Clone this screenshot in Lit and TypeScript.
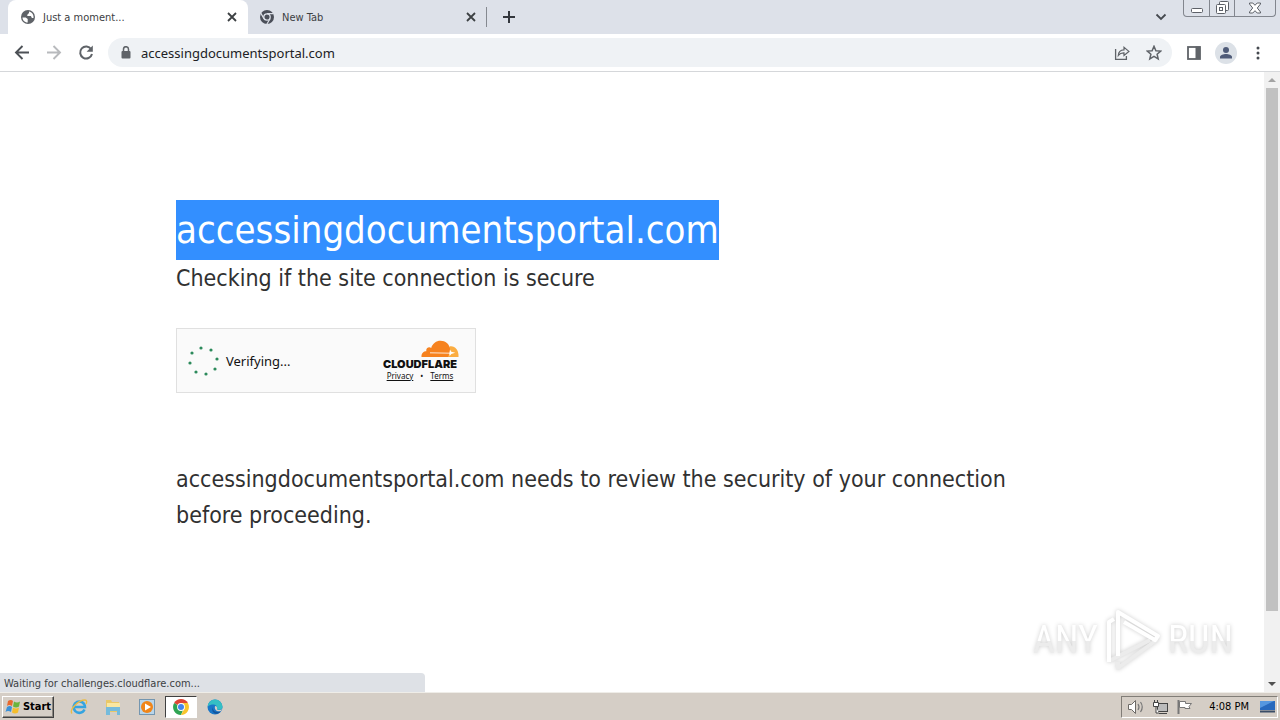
import { LitElement, html, css, svg } from "lit";
import { customElement } from "lit/decorators.js";

const closeIcon = html`<svg width="10" height="10" viewBox="0 0 10 10"><path d="M1 1l8 8M9 1l-8 8" fill="none" stroke="currentColor" stroke-width="1.8"/></svg>`;

const cloud = html`<svg class="cloud" width="38" height="18" viewBox="0 0 38 18" aria-hidden="true">
  <path fill="#fbad41" d="M29 6.2C34 5.500 38 10 37.500 17H23Z"/>
  <path fill="#f6821f" d="M.5 17C.2 13.200 2.700 11.200 5.300 11.200C4.700 8.200 8 6.300 10.200 8C11.600 3.500 15.200.8 19.500.8C24.500.8 28.300 4 29 8.800C29.300 10.500 29 11.700 28.600 12.900L27 17Z"/>
  <path d="M9 12.800L29 13.200" fill="none" stroke="#fff" stroke-width=".8"/>
  <path d="M29 9.500l1.300 2.300 4 .9-4 1.200-1.600 2.100-.4-2.500z" fill="#fff"/>
</svg>`;

const dots = [[14, 2], [24, 4], [30, 13], [28, 23], [19, 28], [9, 26], [3, 17], [5, 7]];

@customElement("app-root")
export class AppRoot extends LitElement {
  static styles = css`
    :host { display: block; font-family: "DejaVu Sans Condensed", "DejaVu Sans", sans-serif; color: #202124; }
    * { box-sizing: border-box; }
    button { font: inherit; color: inherit; background: none; border: 0; padding: 0; display: flex; align-items: center; justify-content: center; }
    svg { display: block; flex: none; }
    .ui { font-size: 11px; line-height: 17px; }
    .screen { display: flex; flex-direction: column; height: 100vh; overflow: hidden; background: #fff; }
    .tabs { display: flex; align-items: flex-start; height: 34px; flex: none; background: #dde1e9; padding-left: 8px; }
    .tab { display: flex; align-items: center; height: 34px; width: 240px; padding: 0 11px 0 12px; gap: 7px; border-radius: 8px 8px 0 0; color: #3c4043; }
    .tab.active { background: #fff; }
    .tab span { flex: 1; }
    .new { height: 20px; margin-top: 7px; padding-left: 16px; border-left: 1px solid #858990; }
    .tab:not(.active) { width: 238px; padding-left: 11px; padding-right: 10px; }
    .search { margin: 13px 16px 0 auto; }
    .window { display: flex; height: 17px; border: 1px solid #82868e; border-top: 0; border-radius: 0 0 4px 4px; margin-right: 4px; color: #5d6168; }
    .window button { width: 25px; }
    .window button + button { border-left: 1px solid #82868e; }
    .window button:last-child { width: 41px; }
    .toolbar { display: flex; align-items: center; flex: none; height: 38px; border-bottom: 1px solid #d5d7da; padding: 0 14px; gap: 16px; color: #5f6368; }
    .address { display: flex; align-items: center; flex: 1; height: 29px; border-radius: 15px; background: #eff2f5; padding: 0 10px; gap: 16px; margin-left: -2px; margin-right: -2px; }
    .address label { display: flex; padding-left: 2px; margin-right: -7px; }
    .address input { flex: 1; min-width: 0; border: 0; padding: 0; background: none; outline: 0; font: 13px/20px "Noto Sans", sans-serif; color: #202124; }
    .avatar { width: 22px; height: 22px; border-radius: 50%; background: #dce1e7; margin: 0 -3px; }
    .view { position: relative; display: flex; flex: 1; min-height: 0; }
    main { flex: 1; min-width: 0; color: #313131; }
    .content { max-width: 960px; margin: 128px auto 0; padding: 0 24px; }
    h1, h2, p { margin: 0; font-weight: 400; }
    h1 { font-size: 38px; line-height: 60px; color: #fff; }
    h1 span { display: inline-block; background: #338fff; }
    h2, p { font-size: 23px; line-height: 36px; }
    p { max-width: 880px; }
    .challenge { display: flex; align-items: center; width: 300px; height: 65px; margin: 32px 0 68px; padding: 0 16px 0 10px; border: 1px solid #e0e0e0; background: #fafafa; color: #111; }
    .verify { flex: 1; padding-left: 5px; font: 13px/20px "Noto Sans", sans-serif; }
    .brand { display: flex; flex-direction: column; align-items: center; width: 78px; }
    .cloud { align-self: flex-end; }
    .brand b { font: 900 11px/12px Inter, sans-serif; }
    .brand .links { display: flex; gap: 7px; font: 8px/12px "Noto Sans", sans-serif; }
    a { color: inherit; }
    .scroll { display: flex; flex-direction: column; align-items: center; width: 16px; background: #f1f1f1; }
    .scroll button { height: 16px; width: 16px; flex: none; }
    .track { flex: 1; align-self: stretch; padding: 0 2px; }
    .thumb { height: 89%; background: #c1c1c1; }
    .status { position: absolute; left: 0; bottom: 0; width: 425px; height: 19px; padding: 2px 4px; background: #dee1e6; border-radius: 0 4px 0 0; color: #3c4043; }
    .mark { position: absolute; right: 47px; bottom: 20px; display: flex; align-items: center; gap: 6px; font: 38px/60px "Roboto Condensed", "Liberation Sans Narrow", Roboto, sans-serif; filter: drop-shadow(0 0 2px #ccc); }
    .mark span { color: transparent; background: linear-gradient(#fff 52%, #ececec 52%); -webkit-background-clip: text; background-clip: text; }
    .taskbar { display: flex; align-items: center; flex: none; height: 28px; background: #d5cec6; border-top: 1px solid #efede8; padding: 0 2px; }
    .start { width: 52px; height: 22px; gap: 1px; border: 1px solid; border-color: #fff #404040 #404040 #fff; box-shadow: inset -1px -1px #8a8680; color: #000; font-weight: 700; margin-right: 9px; }
    .app { width: 32px; height: 22px; margin-right: 2px; }
    .app.active { background: #fff; border: 1px solid; border-color: #404040 #fff #fff #404040; }
    .tray { display: flex; align-items: center; height: 22px; margin-left: auto; padding: 0 1px 0 5px; gap: 7px; border: 1px solid; border-color: #817d77 #fff #fff #817d77; color: #000; }
    .tray time { padding: 0 3px 0 9px; }
  `;

  render() {
    return html`
      <div class="screen">
        <header class="tabs ui">
          <div class="tab active">
            <svg width="16" height="16" viewBox="0 0 16 16"><circle cx="8" cy="8" r="7" fill="#5f6368"/><path d="M2.500 8.500h3.200l2 1.500v3.500C4.500 13.500 2.500 11 2.500 8.500ZM9 2.600v1.500L7.300 5.700v1.400h3.600l1 2h1.600C14 5.700 11.500 2.900 9 2.600Z" fill="#fff"/></svg>
            <span>Just a moment...</span><button aria-label="Close tab">${closeIcon}</button>
          </div>
          <div class="tab">
            <svg width="16" height="16" viewBox="0 0 16 16"><circle cx="8" cy="8" r="7" fill="#4b4f59"/><circle cx="8" cy="8" r="3.200" fill="#4b4f59" stroke="#dde1e9" stroke-width="1.300"/><path d="M8 4.600h6.500M5 9.700L1.800 4.100M11 9.700l-3.200 5.500" stroke="#dde1e9" stroke-width="1.200"/></svg>
            <span>New Tab</span><button aria-label="Close tab">${closeIcon}</button>
          </div>
          <button class="new" aria-label="New tab"><svg width="12" height="12" viewBox="0 0 12 12"><path d="M6 0v12M0 6h12" stroke="#33373d" stroke-width="2"/></svg></button>
          <button class="search" aria-label="Search tabs"><svg width="12" height="8" viewBox="0 0 12 8"><path d="M1.500 1.500L6 6l4.500-4.500" fill="none" stroke="#45494f" stroke-width="1.800"/></svg></button>
          <div class="window">
            <button aria-label="Minimize"><svg width="14" height="14" viewBox="0 0 14 14"><rect x="1.500" y="7.500" width="11" height="4" rx="1" fill="#fff" stroke="currentColor"/></svg></button>
            <button aria-label="Restore"><svg width="14" height="14" viewBox="0 0 14 14"><rect x="4.500" y=".5" width="9" height="9" rx="1" fill="#fff" stroke="currentColor"/><rect x="1.500" y="3.500" width="9" height="9" rx="1" fill="#fff" stroke="currentColor"/><rect x="4.500" y="6.500" width="3" height="3" fill="none" stroke="currentColor"/></svg></button>
            <button aria-label="Close"><svg width="14" height="12" viewBox="0 0 14 12"><path d="M1.500 1h3.300L7 3.300 9.200 1h3.300v1L9.300 6l3.200 4v1H9.200L7 8.700 4.800 11H1.500v-1l3.200-4L1.500 2Z" fill="#fff" stroke="currentColor"/></svg></button>
          </div>
        </header>
        <nav class="toolbar">
          <button aria-label="Back"><svg width="16" height="16" viewBox="0 0 16 16"><path d="M15 7.500H2M8.500 1L2 7.500 8.500 14" fill="none" stroke="#4d5156" stroke-width="1.900"/></svg></button>
          <button aria-label="Forward"><svg width="16" height="16" viewBox="0 0 16 16"><path d="M1 7.500h13M7.500 1L14 7.500 7.500 14" fill="none" stroke="#b8babd" stroke-width="1.900"/></svg></button>
          <button aria-label="Reload"><svg width="16" height="16" viewBox="0 0 16 16"><path d="M13.200 4.200A6 6 0 1 0 14 9" fill="none" stroke="currentColor" stroke-width="2"/><path d="M14.800.5v6.200H8.600Z" fill="currentColor"/></svg></button>
          <div class="address">
            <label for="url" aria-label="Address"><svg width="12" height="14" viewBox="0 0 12 14"><rect x="1.500" y="5" width="9" height="7.500" rx="1" fill="currentColor"/><path d="M3.500 5.500V3.200a2.500 2.500 0 0 1 5 0v2.300" fill="none" stroke="currentColor" stroke-width="1.500"/></svg></label>
            <input id="url" value="accessingdocumentsportal.com">
            <button aria-label="Share"><svg width="16" height="16" viewBox="0 0 16 16"><path d="M1.600 4v10.400h10.800V11" fill="none" stroke="currentColor" stroke-width="1.300"/><path d="M4.300 10.500C4.500 6.800 6.500 5 10 4.900V2.200l4.900 4.200L10 10.500V7.900C7.500 7.800 5.800 8.500 4.300 10.500Z" fill="none" stroke="currentColor" stroke-width="1.200"/></svg></button>
            <button aria-label="Bookmark"><svg width="16" height="16" viewBox="0 0 16 16"><path d="M8 1.300l1.900 4.400 4.800.4-3.600 3.100 1.100 4.700L8 11.400l-4.200 2.500 1.100-4.700L1.300 6.100l4.800-.4Z" fill="none" stroke="currentColor" stroke-width="1.500"/></svg></button>
          </div>
          <button aria-label="Side panel"><svg width="16" height="16" viewBox="0 0 16 16"><rect x="2" y="2" width="12" height="12" fill="none" stroke="currentColor" stroke-width="1.800"/><path d="M9.500 1.500H14V14H9.500Z" fill="currentColor"/></svg></button>
          <button class="avatar" aria-label="Profile"><svg width="14" height="14" viewBox="0 0 14 14"><circle cx="7" cy="4" r="3" fill="#4f5b78"/><path d="M1 12.500V11C1 9 4.500 8 7 8s6 1 6 3v1.500Z" fill="#4f5b78"/></svg></button>
          <button aria-label="Menu"><svg width="16" height="16" viewBox="0 0 16 16"><g fill="#45494f"><circle cx="8" cy="3" r="1.500"/><circle cx="8" cy="8" r="1.500"/><circle cx="8" cy="13" r="1.500"/></g></svg></button>
        </nav>
        <div class="view">
          <main>
            <div class="content">
              <h1><span>accessingdocumentsportal.com</span></h1>
              <h2>Checking if the site connection is secure</h2>
              <section class="challenge">
                <svg width="34" height="30" viewBox="0 0 34 30">${dots.map(([x, y]) => svg`<circle cx=${x} cy=${y} r="1.600" fill="#2c8a5b"/>`)}</svg>
                <span class="verify">Verifying...</span>
                <div class="brand">${cloud}<b>CLOUDFLARE</b><div class="links"><a href="#privacy">Privacy</a><span>•</span><a href="#terms">Terms</a></div></div>
              </section>
              <p>accessingdocumentsportal.com needs to review the security of your connection before proceeding.</p>
            </div>
          </main>
          <div class="scroll">
            <button aria-label="Scroll up"><svg width="8" height="4" viewBox="0 0 8 4"><path d="M0 4l4-4 4 4Z" fill="#a3a3a3"/></svg></button>
            <div class="track"><div class="thumb"></div></div>
            <button aria-label="Scroll down"><svg width="8" height="4" viewBox="0 0 8 4"><path d="M0 0l4 4 4-4Z" fill="#505050"/></svg></button>
          </div>
          <div class="status ui">Waiting for challenges.cloudflare.com...</div>
          <div class="mark"><span>ANY</span>
            <svg width="58" height="64" viewBox="0 0 58 64"><g fill="none" stroke-width="4" stroke-linejoin="round"><path d="M5 53L46 32M54 31L14 60V54" stroke="#ececec"/><path d="M5 54V14l5-3M14 48V4L54 28l-3 4L20 14" stroke="#fff"/></g></svg>
            <span>RUN</span></div>
        </div>
        <footer class="taskbar ui">
          <button class="start"><svg width="17" height="17" viewBox="0 0 17 17"><path d="M3 3q3-2 5 0L7 8Q4 6 2 8Z" fill="#e8692e"/><path d="M9 3.500q3 2 6 0L14 8.500q-3 2-6 0Z" fill="#6bb43d"/><path d="M2 9q3-2 5 0L6 14q-3-2-5.500 0Z" fill="#3b91d8"/><path d="M8 9.500q3 2 6 0L13 14.500q-3 2-6 0Z" fill="#f5bd2b"/></svg>Start</button>
          <button class="app" aria-label="Internet Explorer"><svg width="18" height="18" viewBox="0 0 18 18"><path d="M14.500 11.500A5.700 5.700 0 1 1 15 9H4" fill="none" stroke="#35a4e0" stroke-width="2.500"/><path d="M2 15.500C-1 12 8 2 15 2c2 0 2 2 1 4" fill="none" stroke="#eabb43" stroke-width="1.300"/></svg></button>
          <button class="app" aria-label="File Explorer"><svg width="18" height="18" viewBox="0 0 18 18"><path d="M2 2h5l1 2h7v10H2Z" fill="#e9c869"/><path d="M3 5h13v5H3Z" fill="#f9e7a1"/><path d="M2 9h14v8h-3v-4H6v4H2Z" fill="#75bbdc"/></svg></button>
          <button class="app" aria-label="Media Player"><svg width="18" height="18" viewBox="0 0 18 18"><rect x="1.500" y="1.500" width="15" height="15" fill="#b9d5ea" stroke="#7496b0"/><circle cx="9" cy="9" r="6" fill="#f08519"/><path d="M7 5.500l6 3.500-6 3.500Z" fill="#fff"/></svg></button>
          <button class="app active" aria-label="Chrome"><svg width="16" height="16" viewBox="0 0 16 16"><path d="M8 8L1.100 4A8 8 0 0 1 14.900 4Z" fill="#df4535"/><path d="M8 8L1.100 4A8 8 0 0 0 8 16L11 9Z" fill="#2fa453"/><path d="M8 4H14.900A8 8 0 0 1 8 16L11.500 9Z" fill="#f8c52d"/><circle cx="8" cy="8" r="3.900" fill="#fff"/><circle cx="8" cy="8" r="3" fill="#4385ed"/></svg></button>
          <button class="app" aria-label="Edge"><svg width="16" height="16" viewBox="0 0 16 16"><circle cx="8" cy="8" r="7.500" fill="#1976c8"/><path d="M.6 8A7.400 7.400 0 0 1 15.500 8c0 3-4 3.500-5.500 2.200C11 7 8 5 5 5.500 2.500 6 1 7 .6 8Z" fill="#35bfc4"/><path d="M6 8c-1 4 3 6 7.500 4.500C10 17 3 14 6 8Z" fill="#12549c"/><path d="M8 7c2 0 2.500 1.500 2 3.200 1 1.300 4 1.300 5.400-.7L14 12c-4 1-7-1-6-5Z" fill="#d5cec6"/></svg></button>
          <div class="tray">
            <svg width="18" height="16" viewBox="0 0 18 16"><path d="M1.500 5.500h3l4-4v13l-4-4h-3Z" fill="#fff" stroke="#6d6a66"/><path d="M11 5q2 3 0 6M13.500 3q3.500 5 0 10" fill="none" stroke="#777" stroke-width="1.200"/></svg>
            <svg width="17" height="16" viewBox="0 0 17 16"><rect x="5.500" y="4.500" width="10" height="8" fill="#bbb" stroke="#444"/><path d="M7 14.500h8" stroke="#444"/><path d="M1.500 3.500h5v4h-5ZM2.500 1v2M5.500 1v2M4 8v6h3" fill="#fff" stroke="#444"/></svg>
            <svg width="17" height="16" viewBox="0 0 17 16"><path d="M2.500 1v14" stroke="#777" stroke-width="2"/><path d="M3.500 2.500h6v2h6l-2.500 3 1 2h-5v-1H3.500Z" fill="#fff" stroke="#777"/></svg>
            <time>4:08 PM</time>
            <svg width="17" height="15" viewBox="0 0 17 15"><path d="M1 2h15v9H1Z" fill="#2769bd"/><path d="M1 2h14L1 9Z" fill="#5597df"/><path d="M1 12.500h15" stroke="#3a4d66" stroke-width="2"/></svg>
          </div>
        </footer>
      </div>`;
  }
}
